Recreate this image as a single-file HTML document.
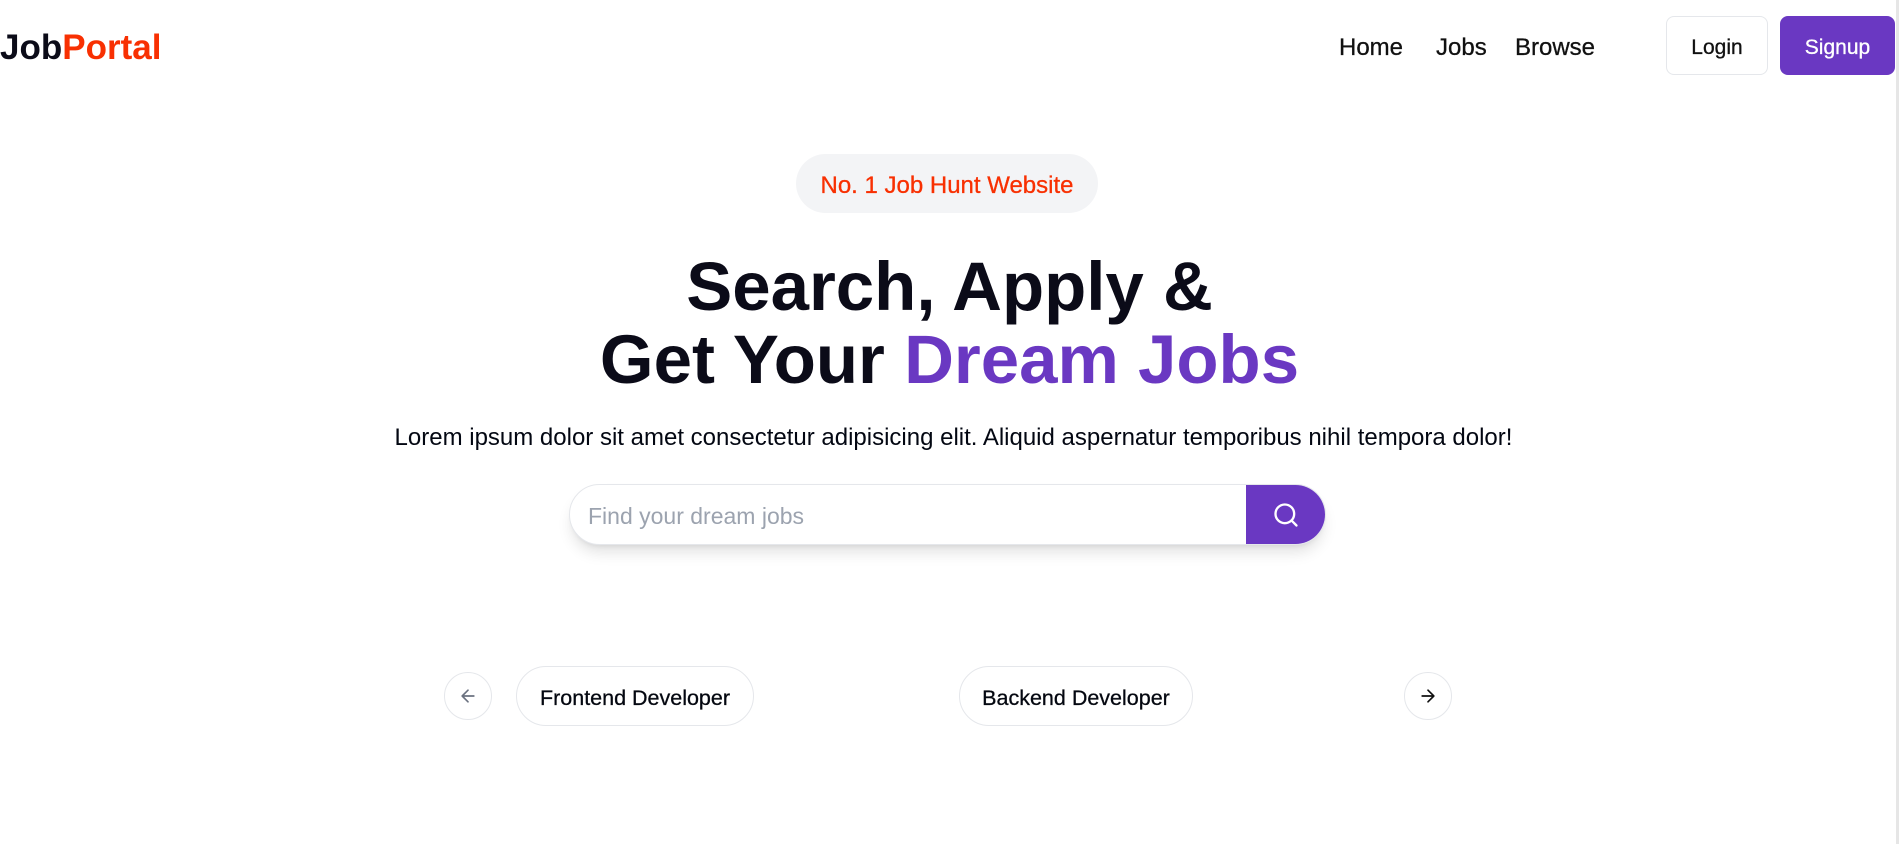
<!DOCTYPE html>
<html><head><meta charset="utf-8"><style>
*{margin:0;padding:0;box-sizing:border-box}
html,body{width:1899px;height:844px;overflow:hidden;background:#fff;font-family:"Liberation Sans",sans-serif;color:#030712}
.abs{position:absolute}
.logo{left:0;top:28px;font-size:35px;font-weight:700;line-height:40px;color:#0b0b18}
.logo span{color:#F83002}
.nav{top:34px;font-size:24px;line-height:28px;color:#111;-webkit-text-stroke:0.3px #111}
.btn{top:16px;height:59px;border-radius:8px;font-size:21px;display:flex;align-items:center;justify-content:center;padding-top:4px;-webkit-text-stroke:0.3px currentColor}
.badge{left:796px;top:154px;width:302px;height:59px;border-radius:30px;background:#f3f4f6;color:#F83002;font-size:24px;display:flex;align-items:center;justify-content:center;padding-top:4px;-webkit-text-stroke:0.3px #F83002}
h1{position:absolute;left:0;width:1899px;text-align:center;font-size:69px;font-weight:700;line-height:73px;top:250px;color:#0b0b18}
h1 span{color:#6A38C2}
.p{left:0;width:1899px;text-align:center;top:424px;font-size:24px;line-height:28px;padding-left:8px}
.search{left:569px;top:484px;width:757px;height:61px;border:1px solid #e5e7eb;border-radius:31px;box-shadow:0 10px 15px -3px rgba(0,0,0,.12),0 4px 6px -4px rgba(0,0,0,.1);overflow:hidden;background:#fff}
.search .ph{position:absolute;left:18px;top:18px;font-size:23px;color:#9ca3af}
.search .go{position:absolute;right:0;top:0;width:79px;height:100%;background:#6A38C2;display:flex;align-items:center;justify-content:center}
.pill{top:666px;height:60px;border:1px solid #e5e7eb;border-radius:30px;font-size:21.5px;display:flex;align-items:center;justify-content:center;padding-top:4px;-webkit-text-stroke:0.3px #111}
.circ{top:672px;width:48px;height:48px;border:1px solid #e5e7eb;border-radius:50%;display:flex;align-items:center;justify-content:center}
</style></head><body>
<div class="abs logo">Job<span>Portal</span></div>
<div class="abs nav" style="left:1339px">Home</div>
<div class="abs nav" style="left:1436px">Jobs</div>
<div class="abs nav" style="left:1515px">Browse</div>
<div class="abs btn" style="left:1666px;width:102px;border:1px solid #e5e7eb;color:#111">Login</div>
<div class="abs btn" style="left:1780px;width:115px;background:#6A38C2;color:#fff">Signup</div>
<div class="abs" style="left:1896px;top:0;width:3px;height:844px;background:#e6e6e6"></div>
<div class="abs badge">No. 1 Job Hunt Website</div>
<h1>Search, Apply &amp;<br>Get Your <span>Dream Jobs</span></h1>
<div class="abs p">Lorem ipsum dolor sit amet consectetur adipisicing elit. Aliquid aspernatur temporibus nihil tempora dolor!</div>
<div class="abs search"><div class="ph">Find your dream jobs</div>
<div class="go"><svg width="28" height="28" viewBox="0 0 24 24" fill="none" stroke="#fff" stroke-width="2" stroke-linecap="round"><circle cx="11" cy="11" r="8"/><path d="M21 21l-4.3-4.3"/></svg></div></div>
<div class="abs circ" style="left:444px"><svg width="20" height="20" viewBox="0 0 24 24" fill="none" stroke="#6b7280" stroke-width="2" stroke-linecap="round" stroke-linejoin="round"><path d="M19 12H5M12 19l-7-7 7-7"/></svg></div>
<div class="abs pill" style="left:516px;width:238px">Frontend Developer</div>
<div class="abs pill" style="left:959px;width:234px">Backend Developer</div>
<div class="abs circ" style="left:1404px"><svg width="20" height="20" viewBox="0 0 24 24" fill="none" stroke="#111" stroke-width="2" stroke-linecap="round" stroke-linejoin="round"><path d="M5 12h14M12 5l7 7-7 7"/></svg></div>
</body></html>
